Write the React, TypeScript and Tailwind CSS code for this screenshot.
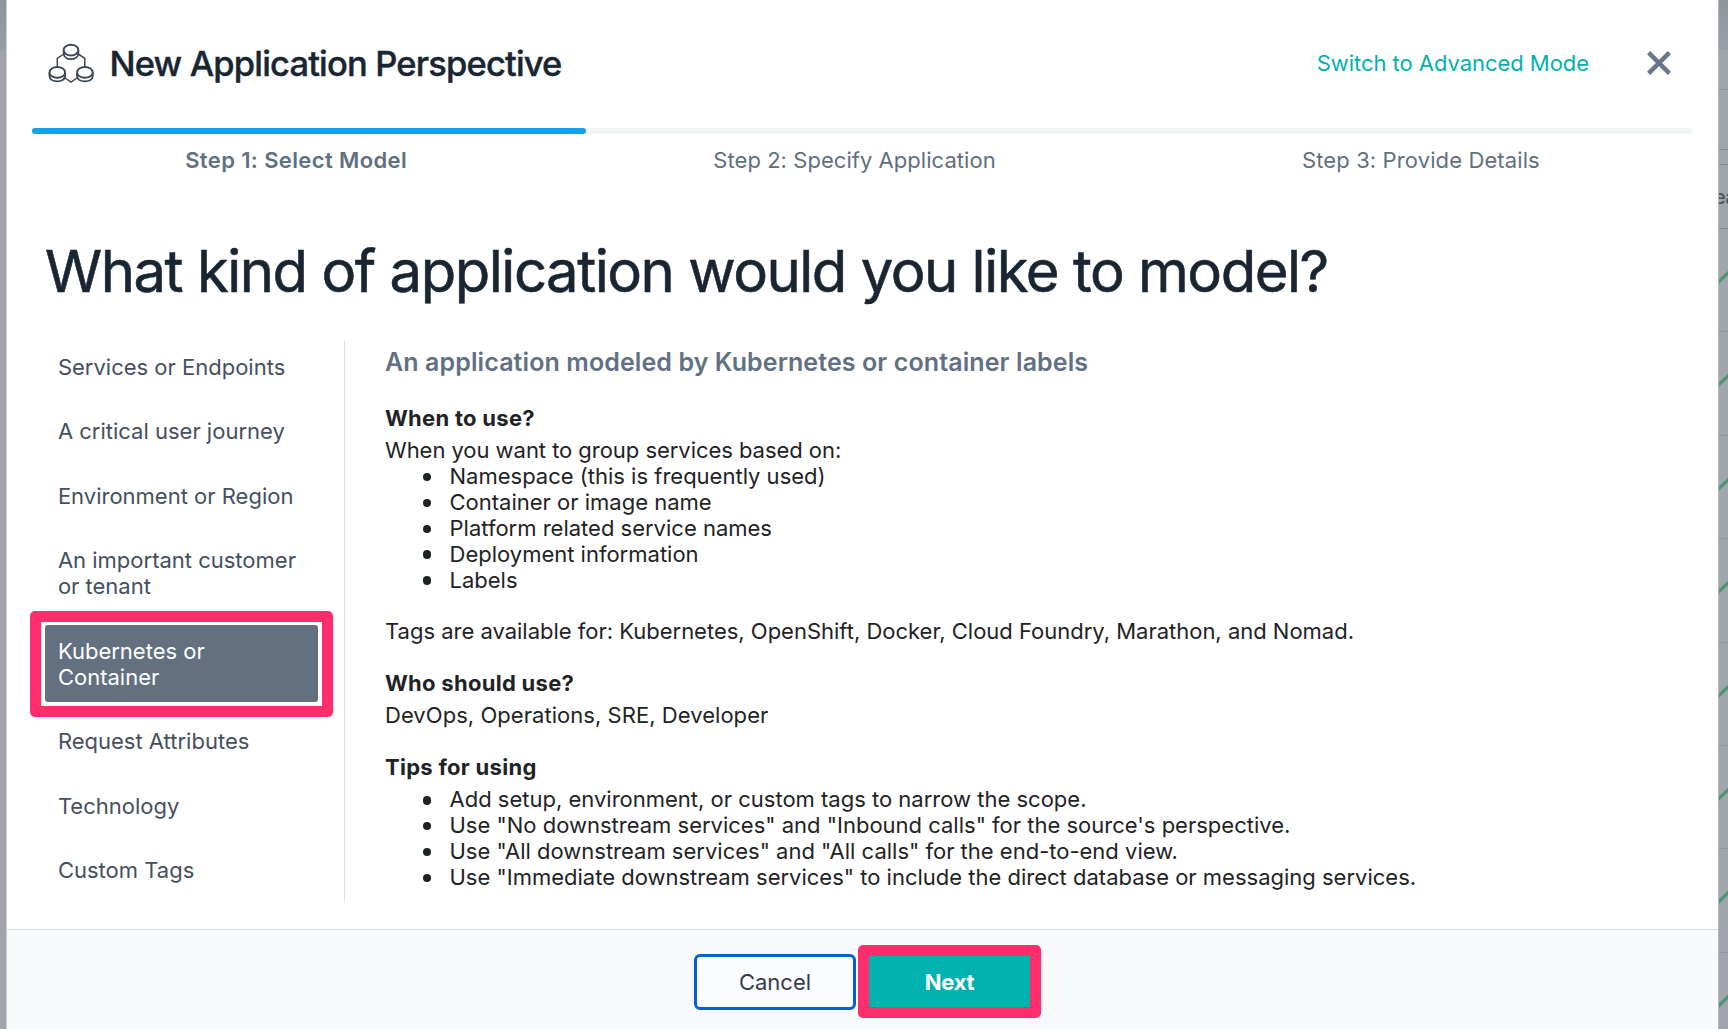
import React from "react";

const MODELS = [
  "Services or Endpoints",
  "A critical user journey",
  "Environment or Region",
  "An important customer or tenant",
  "Kubernetes or Container",
  "Request Attributes",
  "Technology",
  "Custom Tags",
];
const SELECTED = "Kubernetes or Container";

const GROUPINGS = [
  "Namespace (this is frequently used)",
  "Container or image name",
  "Platform related service names",
  "Deployment information",
  "Labels",
];

const TIPS = [
  "Add setup, environment, or custom tags to narrow the scope.",
  'Use "No downstream services" and "Inbound calls" for the source\'s perspective.',
  'Use "All downstream services" and "All calls" for the end-to-end view.',
  'Use "Immediate downstream services" to include the direct database or messaging services.',
];

function Disc({ cx, top, rx }: { cx: number; top: number; rx: number }) {
  const mid = top + 5.4;
  return (
    <g fill="white" strokeWidth="1.9">
      <path
        d={`M${cx - rx} ${mid} V${mid + 3.6} C${cx - rx} ${mid + 10.8} ${cx + rx} ${mid + 10.8} ${cx + rx} ${mid + 3.6} V${mid}`}
      />
      <ellipse cx={cx} cy={mid} rx={rx} ry={5.4} />
    </g>
  );
}

function PerspectiveIcon() {
  return (
    <svg className="-mt-0.5 h-10 w-[46px] shrink-0" viewBox="0 0 46 40" fill="none" stroke="#3a4652">
      <path d="M15 11.5 L9.3 15.3 V24 M31 11.5 L36.8 15.3 V24 M17 35 L23 39 L29 35" strokeWidth="1.5" />
      <Disc cx={23} top={1.7} rx={7.3} />
      <Disc cx={9.3} top={24} rx={7.8} />
      <Disc cx={36.9} top={24} rx={7.8} />
    </svg>
  );
}

function Bullets({ items }: { items: string[] }) {
  return (
    <ul>
      {items.map((item) => (
        <li key={item} className="flex items-center pl-[37.5px]">
          <span className="mr-[18.5px] size-[8.5px] shrink-0 rounded-full bg-[#1e2325]" />
          {item}
        </li>
      ))}
    </ul>
  );
}

function BackdropTable() {
  return (
    <div className="flex min-w-0 flex-1 flex-col overflow-hidden border-l border-[#b4b8be] bg-[#a1a5ac] text-[20px]">
      <div className="h-[50px] shrink-0 bg-linear-to-b from-[#8f949d] to-[#9a9ea7]" />
      <div className="h-10 shrink-0 border-b border-[#8d929a]" />
      <div className="h-[60px] shrink-0 border-b border-[#868b93]" />
      <div className="h-[14.5px] shrink-0 border-b border-[#868b93]" />
      <div className="-ml-[5px] flex h-[64.5px] shrink-0 items-center border-b border-[#868b93] pt-[3px] font-medium tracking-[-0.03em] text-[#4d535e]">
        ea
      </div>
      {[0, 1, 2, 3, 4, 5, 6, 7].map((row) => (
        <div key={row} className="h-[103.4px] shrink-0 border-b border-[#92979e]">
          <svg className="h-[103px] w-[10px]" viewBox="0 0 10 103">
            <path d="M-2 54.5 L12 41" stroke="#4b9474" strokeWidth="3.2" />
          </svg>
        </div>
      ))}
    </div>
  );
}

export default function App() {
  return (
    <div className="flex h-[1029px] w-[1728px] overflow-hidden bg-white font-['Inter',sans-serif] text-[22px] leading-[25.85px]">
      <div className="w-[7px] shrink-0 border-r border-[#c9ccd1] bg-[#a1a4ad]">
        <div className="h-[50px] bg-linear-to-b from-[#8f939c] to-[#999da6]" />
      </div>

      <div className="flex w-[1711px] shrink-0 flex-col bg-white">
        <header className="flex h-[127.5px] shrink-0 items-center pr-[47.5px] pl-[41px]">
          <PerspectiveIcon />
          <h1 className="ml-[15.5px] text-[34.5px] leading-10 font-medium tracking-[-0.0243em] text-[#192632] [-webkit-text-stroke:0.4px_#192632]">
            New Application Perspective
          </h1>
          <a className="mr-[57.5px] ml-auto tracking-[-0.002em] text-[#02b1ae]">Switch to Advanced Mode</a>
          <svg className="-mt-0.5 size-6" viewBox="0 0 24 24" stroke="#67768a" strokeWidth="4.4">
            <path d="M1.6 1.6 L22.4 22.4 M22.4 1.6 L1.6 22.4" />
          </svg>
        </header>

        <div className="mx-[25px] h-[6.5px] shrink-0 rounded-full bg-[#f1f5f6]">
          <div className="h-full w-1/3 rounded-full bg-[#17a1e6]" />
        </div>
        <div className="mx-[25px] mt-[14px] flex shrink-0 justify-around text-[#5f7080]">
          <span className="font-semibold tracking-[0.017em]">Step 1: Select Model</span>
          <span className="tracking-[0.002em]">Step 2: Specify Application</span>
          <span className="tracking-[0.005em]">Step 3: Provide Details</span>
        </div>

        <h2 className="mt-[62px] ml-[38px] shrink-0 text-[58px] leading-[70px] tracking-[-0.0255em] whitespace-nowrap text-[#192632] [-webkit-text-stroke:0.6px_#192632]">
          What kind of application would you like to model?
        </h2>

        <div className="mt-[35px] flex h-[561.7px] shrink-0">
          <nav className="flex w-[338px] shrink-0 flex-col gap-[12.93px] border-r-[1.5px] border-[#dde1e6] pr-[26.5px] pl-[38.4px] text-[#44505e]">
            {MODELS.map((model) =>
              model === SELECTED ? (
                <div key={model} className="relative rounded-[3px] bg-[#62707f] pt-[13.9px] pr-20 pb-[11.9px] pl-[12.5px] text-white">
                  {model}
                  <div className="absolute -top-[14px] -left-[15.4px] h-[106px] w-[303px] rounded-[5px] border-[11px] border-[#ff2d6b]" />
                </div>
              ) : (
                <div key={model} className="pt-[13.9px] pr-3 pb-[11.9px] pl-[12.5px]">
                  {model}
                </div>
              ),
            )}
          </nav>

          <section className="pt-[6.8px] pl-[40px] whitespace-nowrap text-[#1e2325]">
            <h3 className="mb-[29.4px] text-[25px] leading-[29px] font-semibold tracking-[0.004em] text-[#617183]">
              An application modeled by Kubernetes or container labels
            </h3>
            <h4 className="mb-[6.5px] font-bold tracking-[0.013em]">When to use?</h4>
            <p className="tracking-[-0.002em]">When you want to group services based on:</p>
            <Bullets items={GROUPINGS} />
            <p className="mt-[25.85px] tracking-[-0.0005em]">
              Tags are available for: Kubernetes, OpenShift, Docker, Cloud Foundry, Marathon, and Nomad.
            </p>
            <h4 className="mt-[25.85px] mb-[6.5px] font-bold tracking-[0.013em]">Who should use?</h4>
            <p className="tracking-[0.002em]">DevOps, Operations, SRE, Developer</p>
            <h4 className="mt-[25.85px] mb-[6.5px] font-bold tracking-[0.013em]">Tips for using</h4>
            <Bullets items={TIPS} />
          </section>
        </div>

        <footer className="mt-auto flex h-[100px] shrink-0 items-start border-t border-[#d8dce0] bg-[#f8f9fb] pt-[24px] pl-[687px]">
          <button className="h-[56px] w-[162px] rounded-[6px] border-3 border-[#0560d3] bg-[#fbfcfd] pt-0.5 text-[#333d4b]">
            Cancel
          </button>
          <button className="relative mt-[2px] ml-[13px] h-[51px] w-[161px] bg-[#00b3b1] pt-0.5 font-bold tracking-[-0.01em] text-white">
            Next
            <span className="absolute -top-[11px] -left-[11px] h-[73px] w-[183px] rounded-[5px] border-[11px] border-[#ff2d6b]" />
          </button>
        </footer>
      </div>

      <BackdropTable />
    </div>
  );
}
